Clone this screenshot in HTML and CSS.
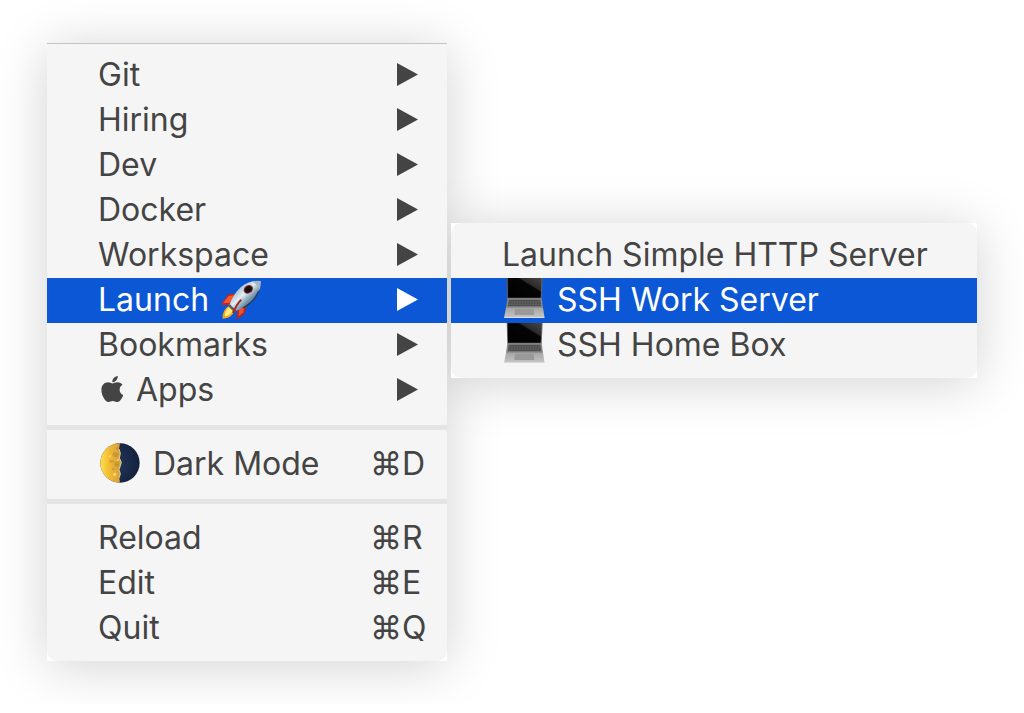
FILE: index.html
```
<!DOCTYPE html>
<html lang="en">
<head>
    <meta charset="UTF-8">
    <meta name="viewport" content="width=device-width, initial-scale=1.0">
    <title>Menu</title>
    <link rel="stylesheet" href="styles.css">
</head>
<body>
    <!-- Shared icons -->
    <svg class="icon-defs" aria-hidden="true">
        <defs>
            <linearGradient id="screen" x1="0" y1="1" x2="1" y2="0">
                <stop offset="0" stop-color="#000"/>
                <stop offset="0.62" stop-color="#050505"/>
                <stop offset="0.66" stop-color="#2b2b2b"/>
                <stop offset="1" stop-color="#484848"/>
            </linearGradient>
            <linearGradient id="palm" x1="0" y1="0" x2="0" y2="1">
                <stop offset="0" stop-color="#a5a5a5"/>
                <stop offset="1" stop-color="#c6c6c6"/>
            </linearGradient>
            <linearGradient id="hull" x1="0" y1="0" x2="1" y2="1">
                <stop offset="0.2" stop-color="#8fb2c9"/>
                <stop offset="0.45" stop-color="#e3edf3"/>
                <stop offset="0.62" stop-color="#7898b0"/>
                <stop offset="0.85" stop-color="#33495f"/>
            </linearGradient>
            <linearGradient id="gold" x1="0" y1="0" x2="1" y2="0">
                <stop offset="0" stop-color="#ffdf4a"/>
                <stop offset="0.4" stop-color="#f3bd35"/>
                <stop offset="1" stop-color="#cf9c3a"/>
            </linearGradient>
            <radialGradient id="night" cx="0.3" cy="0.5" r="0.7">
                <stop offset="0" stop-color="#24395f"/>
                <stop offset="1" stop-color="#14213d"/>
            </radialGradient>
        </defs>
        <symbol id="arrow" viewBox="0 0 21 23">
            <path d="M0 0L21 11.5L0 23z" fill="currentColor"/>
        </symbol>
        <symbol id="laptop" viewBox="42 23 123 120">
            <path d="M50 20H158L155 86H52z" fill="#666"/>
            <path d="M53 20H155L152 82H54z" fill="url(#screen)"/>
            <path d="M52 84H155L159 113H48z" fill="#8a8a8a"/>
            <path d="M56 88H151L154 108H53z" fill="#4c4c4c"/>
            <path d="M56 93H151M55 98H152M54 103H153" stroke="#7c7c7c" stroke-width="1.5" stroke-dasharray="6 2"/>
            <path d="M48 112H159L163 138V143H43V138z" fill="url(#palm)"/>
            <path d="M75 115H131L133 134H73z" fill="#999"/>
            <path d="M43 140H163V143H43z" fill="#ddd"/>
        </symbol>
    </svg>

    <nav class="menu">
        <ul class="menu-list">
            <li><button class="item">Git<svg class="arrow"><use href="#arrow"/></svg></button></li>
            <li><button class="item">Hiring<svg class="arrow"><use href="#arrow"/></svg></button></li>
            <li><button class="item">Dev<svg class="arrow"><use href="#arrow"/></svg></button></li>
            <li><button class="item">Docker<svg class="arrow"><use href="#arrow"/></svg></button></li>
            <li><button class="item">Workspace<svg class="arrow"><use href="#arrow"/></svg></button></li>
            <li class="has-submenu">
                <button class="item active" aria-expanded="true">
                    Launch
                    <svg class="rocket" viewBox="62 22 126 120" aria-hidden="true">
                        <path d="M113 63Q92 62 84 68L64 96L95 97z" fill="#c5271f"/>
                        <path d="M108 67L87 71L72 91L94 90z" fill="#ef5a35"/>
                        <path d="M143 88Q142 110 135 123L112 141L114 111z" fill="#bd211d"/>
                        <path d="M136 99L132 119L118 131L119 110z" fill="#ee4f32"/>
                        <path d="M88 100Q68 113 70 138Q97 137 105 116z" fill="#f6a927"/>
                        <path d="M89 104Q76 115 77 131Q94 128 99 114z" fill="#ffed75"/>
                        <path d="M184 25Q150 22 125 43Q103 62 90 98L108 116Q143 103 163 79Q184 57 184 25z" fill="url(#hull)"/>
                        <path d="M184 25Q169 23 159 27Q175 34 180 52Q185 40 184 25z" fill="#a8b4bd"/>
                        <path d="M178 55Q166 86 130 106" fill="none" stroke="#263b50" stroke-width="4"/>
                        <path d="M91 94L112 114L106 119L86 100z" fill="#59616b"/>
                        <ellipse cx="147" cy="50" rx="15" ry="12" transform="rotate(-35 147 50)" fill="#8d2824"/>
                        <ellipse cx="147" cy="50" rx="11" ry="9" transform="rotate(-35 147 50)" fill="#150e16"/>
                        <path d="M126 81Q112 95 101 121" fill="none" stroke="#a52622" stroke-width="6"/>
                    </svg>
                    <svg class="arrow"><use href="#arrow"/></svg>
                </button>
                <div class="menu submenu">
                    <ul class="menu-list">
                        <li><button class="item">Launch Simple HTTP Server</button></li>
                        <li><button class="item active"><svg class="laptop"><use href="#laptop"/></svg>SSH Work Server</button></li>
                        <li><button class="item"><svg class="laptop"><use href="#laptop"/></svg>SSH Home Box</button></li>
                    </ul>
                </div>
            </li>
            <li><button class="item">Bookmarks<svg class="arrow"><use href="#arrow"/></svg></button></li>
            <li>
                <button class="item">
                    <svg class="apple" viewBox="4 32 366 448" aria-hidden="true">
                        <path fill="currentColor" d="M318.700 268.700c-.2-36.700 16.400-64.400 50-84.800-18.800-26.900-47.200-41.700-84.700-44.600-35.500-2.800-74.300 20.700-88.500 20.700-15 0-49.400-19.700-76.400-19.700C63.300 141.200 4 184.800 4 273.500q0 39.300 14.400 81.200c12.800 36.700 59 126.700 107.200 125.200 25.200-.6 43-17.900 75.800-17.900 31.800 0 48.300 17.900 76.400 17.900 48.600-.7 90.400-82.500 102.600-119.300-65.200-30.700-61.700-90-61.700-91.900zm-56.600-164.200c27.300-32.400 24.800-61.900 24-72.500-24.100 1.400-52 16.400-67.900 34.900-17.500 19.800-27.800 44.300-25.600 71.900 26.100 2 49.900-11.400 69.500-34.300z"/>
                    </svg>
                    Apps
                    <svg class="arrow"><use href="#arrow"/></svg>
                </button>
            </li>
            <li class="separator"></li>
            <li>
                <button class="item">
                    <svg class="moon" viewBox="0 0 120 120" aria-hidden="true">
                        <circle cx="60" cy="60" r="59" fill="url(#night)"/>
                        <path d="M60 1A59 59 0 0 0 60 119L58 104L61 92L57 80L61 68L64 58L58 45L61 31L57 18z" fill="url(#gold)"/>
                        <g fill="#a97e32" opacity="0.4">
                            <ellipse cx="46" cy="35" rx="9" ry="7"/>
                            <ellipse cx="35" cy="55" rx="7" ry="5"/>
                            <ellipse cx="50" cy="64" rx="7" ry="8"/>
                            <circle cx="40" cy="78" r="4"/>
                            <circle cx="52" cy="16" r="4"/>
                        </g>
                        <g fill="#ffe68a" opacity="0.7">
                            <circle cx="44" cy="94" r="5"/>
                            <circle cx="30" cy="40" r="3"/>
                            <circle cx="54" cy="51" r="3"/>
                        </g>
                        <path d="M57 18L61 31L58 45L64 58L61 68L57 80L61 92L58 104" fill="none" stroke="#e8cf93" stroke-width="3"/>
                    </svg>
                    Dark Mode
                    <span class="shortcut">⌘D</span>
                </button>
            </li>
            <li class="separator"></li>
            <li><button class="item">Reload<span class="shortcut">⌘R</span></button></li>
            <li><button class="item">Edit<span class="shortcut">⌘E</span></button></li>
            <li><button class="item">Quit<span class="shortcut">⌘Q</span></button></li>
        </ul>
    </nav>
</body>
</html>
```
FILE: styles.css
```
body {
    margin: 0;
    padding: 43px 47px;
    background-color: #fff;
    font-family: Inter, "Liberation Sans", sans-serif;
    font-size: 32px;
}
.icon-defs {
    display: block;
    width: 0;
    height: 0;
}
.menu {
    width: max-content;
    min-width: 400px;
    background-color: #fff;
    box-shadow: 0 5px 50px rgba(0, 0, 0, 0.18);
}
.menu-list {
    list-style: none;
    margin: 0;
    padding: 9px 0 10px;
    border-top: 1px solid #c4c4c4;
    border-radius: 0 0 10px 10px;
    background-color: #f5f5f5;
}
.item {
    display: flex;
    align-items: center;
    width: 100%;
    height: 45px;
    padding: 0 0 2px 51px;
    border: none;
    background: none;
    color: #444;
    font: inherit;
    text-align: left;
    white-space: nowrap;
}
.item.active {
    background-color: #0b57d6;
    color: #fff;
}
.arrow {
    width: 21px;
    height: 23px;
    margin-left: auto;
    margin-right: 29px;
}
.shortcut {
    width: 77px;
    margin-left: auto;
}
.separator {
    height: 5px;
    margin: 12px 0;
    background-color: #e4e4e4;
}

/* Submenu opens beside its parent row */
.has-submenu {
    position: relative;
}
.submenu {
    position: absolute;
    top: -55px;
    left: 100%;
    margin-left: 4px;
    /* keep its shadow off the parent menu */
    clip-path: inset(-60px -60px -60px -4px);
}
.submenu .menu-list {
    padding: 10px 0;
    border-top: none;
    border-radius: 10px;
}
.submenu .item {
    padding-right: 49px;
}

/* Icons */
.rocket {
    width: 42px;
    height: 40px;
    margin-left: 11px;
}
.laptop {
    width: 41px;
    height: 40px;
    margin: 0 12px 3px 2px;
}
.apple {
    width: 22px;
    height: 26px;
    margin: 0 13px 2px 3px;
}
.moon {
    width: 40px;
    height: 40px;
    margin: 0 13px 2px 2px;
}
```
